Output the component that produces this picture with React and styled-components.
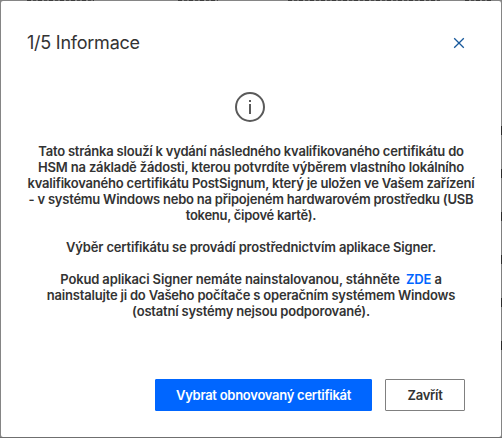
import React, { useState } from 'react';
import styled, { createGlobalStyle } from 'styled-components';

const GlobalStyle = createGlobalStyle`
* {
  box-sizing: border-box;
}
body {
  margin: 0;
  background: #7f7f7f;
  font-family: Inter, "Liberation Sans", sans-serif;
  color: #333;
}
`

// dimmed page behind the dialog, only a 1px rim of it shows
const Page = styled.div`
width: 502px;
height: 438px;
padding: 1px;
overflow: hidden;
background-color: #858585;
background-image:
  repeating-linear-gradient(90deg, #3c3c3c 0 4px, #858585 4px 6px, #4a4a4a 6px 9px, #777 9px 11px),
  repeating-linear-gradient(90deg, #3c3c3c 0 4px, #858585 4px 6px, #4a4a4a 6px 9px, #777 9px 11px),
  repeating-linear-gradient(90deg, #3c3c3c 0 4px, #858585 4px 6px, #4a4a4a 6px 9px, #777 9px 11px),
  repeating-linear-gradient(90deg, #3c3c3c 0 4px, #858585 4px 6px, #4a4a4a 6px 9px, #777 9px 11px),
  repeating-linear-gradient(#2b2b2b 0 9px, #808080 9px 43px),
  linear-gradient(#6f6f6f, #6f6f6f);
background-repeat: no-repeat;
background-size: 67px 1px, 40px 1px, 152px 1px, 28px 1px, 1px 224px, 502px 1px;
background-position: 27px 0, 178px 0, 288px 0, 465px 0, 501px 126px, 0 437px;
`

const Modal = styled.div`
display: flex;
flex-direction: column;
width: 500px;
height: 436px;
padding: 31px 36px 26px 26px;
background: #fff;
border-radius: 2px;
`

const Header = styled.header`
display: flex;
justify-content: space-between;
align-items: center;
height: 22px;
`

const Title = styled.h1`
margin: 0;
font-size: 18px;
line-height: 22px;
font-weight: 400;
letter-spacing: -0.24px;
white-space: nowrap;
`

const CloseButton = styled.button`
display: flex;
padding: 0;
border: none;
background: transparent;
cursor: pointer;
`

const Content = styled.div`
display: flex;
flex-direction: column;
align-items: center;
width: 448px;
margin-top: 37px;
`

const InfoIcon = styled.svg`
margin-right: 2px;
`

const Message = styled.div`
display: flex;
flex-direction: column;
gap: 16px;
margin-top: 20px;
`

const Paragraph = styled.p`
display: flex;
flex-direction: column;
align-items: center;
margin: 0;
font-size: 13px;
line-height: 16px;
font-weight: 600;
`

const Line = styled.span`
white-space: pre;
letter-spacing: ${(props) => props.$spacing || -0.2}px;
`

const Download = styled.a`
color: #06f;
text-decoration: none;
`

const Footer = styled.footer`
display: flex;
justify-content: flex-end;
gap: 13px;
margin-top: auto;
`

const Button = styled.button`
width: ${(props) => (props.$primary ? '217px' : '80px')};
height: 32px;
padding: 0;
border: 1px solid ${(props) => (props.$primary ? '#06f' : '#808080')};
border-radius: 1px;
background: ${(props) => (props.$primary ? '#06f' : '#fff')};
color: ${(props) => (props.$primary ? '#fff' : '#333')};
font-family: inherit;
font-size: 13px;
font-weight: 600;
letter-spacing: -0.27px;
white-space: nowrap;
cursor: pointer;
`

const App = () => {
  const [open, setOpen] = useState(true);

  const close = () => {
    setOpen(false);
  }

  return (
    <Page>
      <GlobalStyle />
      {open && (
        <Modal>
          <Header>
            <Title>1/5 Informace</Title>
            <CloseButton onClick={close} aria-label="Zavřít">
              <svg width="12" height="12" viewBox="0 0 12 12" fill="none" stroke="#17589b" strokeWidth="1.3">
                <path d="M1.2 1.2 10.8 10.8M10.8 1.2 1.2 10.8" />
              </svg>
            </CloseButton>
          </Header>
          <Content>
            <InfoIcon width="32" height="32" viewBox="0 0 32 32" fill="none">
              <circle cx="16" cy="16" r="14" stroke="#5a5a5a" strokeWidth="2" />
              <path d="M16 13v10M16 9v2" stroke="#5a5a5a" strokeWidth="2" />
            </InfoIcon>
            <Message>
              <Paragraph>
                <Line $spacing={-0.21}>Tato stránka slouží k vydání následného kvalifikovaného certifikátu do</Line>
                <Line $spacing={-0.17}>HSM na základě žádosti, kterou potvrdíte výběrem vlastního lokálního</Line>
                <Line $spacing={-0.21}>kvalifikovaného certifikátu PostSignum, který je uložen ve Vašem zařízení</Line>
                <Line $spacing={-0.23}>- v systému Windows nebo na připojeném hardwarovém prostředku (USB</Line>
                <Line $spacing={-0.28}>tokenu, čipové kartě).</Line>
              </Paragraph>
              <Paragraph>
                <Line $spacing={-0.18}>Výběr certifikátu se provádí prostřednictvím aplikace Signer.</Line>
              </Paragraph>
              <Paragraph>
                <Line $spacing={-0.14}>Pokud aplikaci Signer nemáte nainstalovanou, stáhněte  <Download href="#">ZDE</Download> a</Line>
                <Line>nainstalujte ji do Vašeho počítače s operačním systémem Windows</Line>
                <Line>(ostatní systémy nejsou podporované).</Line>
              </Paragraph>
            </Message>
          </Content>
          <Footer>
            <Button $primary>Vybrat obnovovaný certifikát</Button>
            <Button onClick={close}>Zavřít</Button>
          </Footer>
        </Modal>
      )}
    </Page>
  )
}

export default App;
